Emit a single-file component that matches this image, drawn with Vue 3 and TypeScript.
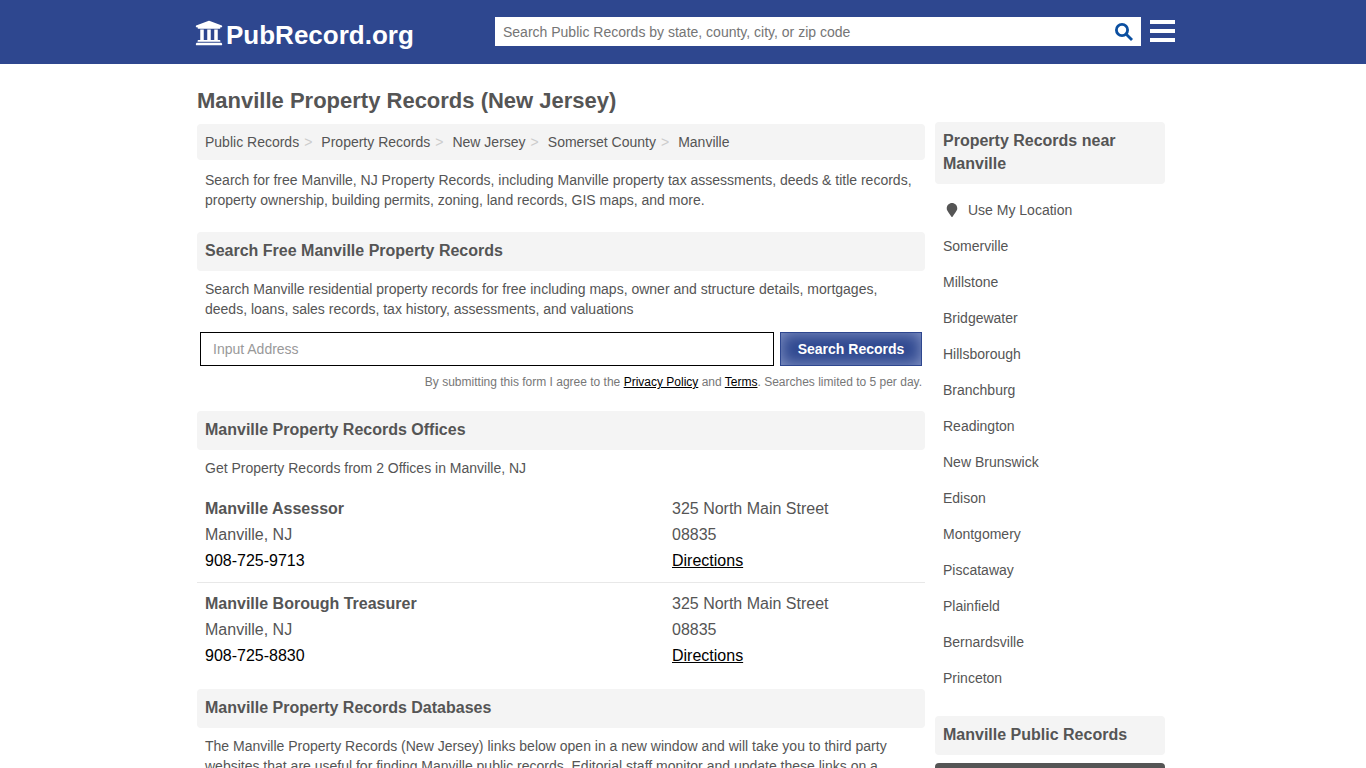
<script setup lang="ts">
import { ref } from 'vue'

interface Office {
  name: string
  city: string
  phone: string
  street: string
  zip: string
}

const query = ref('')
const address = ref('')

const crumbs: string[] = ['Public Records', 'Property Records', 'New Jersey', 'Somerset County', 'Manville']

const offices: Office[] = [
  { name: 'Manville Assessor', city: 'Manville, NJ', phone: '908-725-9713', street: '325 North Main Street', zip: '08835' },
  { name: 'Manville Borough Treasurer', city: 'Manville, NJ', phone: '908-725-8830', street: '325 North Main Street', zip: '08835' },
]

const nearby: string[] = [
  'Somerville', 'Millstone', 'Bridgewater', 'Hillsborough', 'Branchburg', 'Readington', 'New Brunswick',
  'Edison', 'Montgomery', 'Piscataway', 'Plainfield', 'Bernardsville', 'Princeton',
]
</script>

<template>
  <div class="page">
    <header class="topbar">
      <div class="topbar-inner">
        <a class="logo" href="#">
          <svg class="logo-icon" viewBox="0 0 512 512" aria-hidden="true">
            <path d="M496 128v16a8 8 0 0 1-8 8h-24v12c0 6.627-5.373 12-12 12H60c-6.627 0-12-5.373-12-12v-12H24a8 8 0 0 1-8-8v-16a8 8 0 0 1 4.941-7.392l232-88a7.996 7.996 0 0 1 6.118 0l232 88A8 8 0 0 1 496 128zm-24 304H40c-13.255 0-24 10.745-24 24v16a8 8 0 0 0 8 8h464a8 8 0 0 0 8-8v-16c0-13.255-10.745-24-24-24zM96 192v192H60c-6.627 0-12 5.373-12 12v20h416v-20c0-6.627-5.373-12-12-12h-36V192h-64v192h-64V192h-64v192h-64V192H96z" />
          </svg>
          <span>PubRecord.org</span>
        </a>
        <form class="site-search" role="search" @submit.prevent>
          <input v-model="query" type="text" aria-label="Search Public Records" placeholder="Search Public Records by state, county, city, or zip code" />
          <button type="submit" aria-label="Search">
            <svg viewBox="0 0 18 18" aria-hidden="true">
              <circle cx="7" cy="7" r="5.6" />
              <path d="M11 11l6 6" />
            </svg>
          </button>
        </form>
        <button class="menu" type="button" aria-label="Menu">
          <span></span><span></span><span></span>
        </button>
      </div>
    </header>

    <div class="content">
      <main class="main">
        <h1>Manville Property Records (New Jersey)</h1>
        <nav aria-label="Breadcrumb">
          <ol class="crumbs">
            <li v-for="crumb in crumbs" :key="crumb"><a href="#">{{ crumb }}</a></li>
          </ol>
        </nav>
        <p class="intro">Search for free Manville, NJ Property Records, including Manville property tax assessments, deeds &amp; title records, property ownership, building permits, zoning, land records, GIS maps, and more.</p>

        <section>
          <h2>Search Free Manville Property Records</h2>
          <p class="text">Search Manville residential property records for free including maps, owner and structure details, mortgages, deeds, loans, sales records, tax history, assessments, and valuations</p>
          <form class="address" @submit.prevent>
            <input v-model="address" type="text" aria-label="Input Address" placeholder="Input Address" />
            <button type="submit">Search Records</button>
          </form>
          <p class="terms">By submitting this form I agree to the <a href="#">Privacy Policy</a> and <a href="#">Terms</a>. Searches limited to 5 per day.</p>
        </section>

        <section>
          <h2>Manville Property Records Offices</h2>
          <p class="text">Get Property Records from 2 Offices in Manville, NJ</p>
          <ul class="offices">
            <li v-for="office in offices" :key="office.name" class="office">
              <div>
                <h3>{{ office.name }}</h3>
                <div>{{ office.city }}</div>
                <a class="phone" href="#">{{ office.phone }}</a>
              </div>
              <div>
                <div>{{ office.street }}</div>
                <div>{{ office.zip }}</div>
                <a href="#">Directions</a>
              </div>
            </li>
          </ul>
        </section>

        <section>
          <h2>Manville Property Records Databases</h2>
          <p class="text">The Manville Property Records (New Jersey) links below open in a new window and will take you to third party websites that are useful for finding Manville public records. Editorial staff monitor and update these links on a</p>
        </section>
      </main>

      <aside class="side">
        <h2>Property Records near Manville</h2>
        <ul class="nearby">
          <li>
            <a href="#">
              <svg class="pin" viewBox="0 0 384 512" aria-hidden="true">
                <path d="M172.268 501.67C26.97 291.031 0 269.413 0 192 0 85.961 85.961 0 192 0s192 85.961 192 192c0 77.413-26.97 99.031-172.268 309.67-9.535 13.774-29.93 13.773-39.464 0z" />
              </svg>
              Use My Location
            </a>
          </li>
          <li v-for="town in nearby" :key="town"><a href="#">{{ town }}</a></li>
        </ul>
        <h2>Manville Public Records</h2>
        <div class="panel"></div>
      </aside>
    </div>
  </div>
</template>

<style>
body {
  margin: 0;
  background: #fff;
}
</style>

<style scoped>
.page {
  font-family: "Liberation Sans", Arial, sans-serif;
  font-size: 14px;
  line-height: 20px;
  color: #555;
}
.page *,
.page *::before,
.page *::after {
  box-sizing: border-box;
}
h1, h2, h3, p, ul, ol {
  margin: 0;
  padding: 0;
}
ul, ol {
  list-style: none;
}
button {
  border: 0;
  padding: 0;
  cursor: pointer;
  font-family: inherit;
}
input {
  font-family: inherit;
  font-size: 14px;
  border-radius: 0;
  outline: none;
}
.topbar {
  background: #2e478f;
}
.topbar-inner {
  display: flex;
  align-items: flex-start;
  max-width: 984px;
  height: 64px;
  margin: 0 auto;
  padding-left: 4px;
}
.logo {
  display: flex;
  align-items: center;
  flex: 0 0 300px;
  gap: 3px;
  margin-top: 19px;
  color: #fff;
  font-size: 26px;
  font-weight: bold;
  line-height: 30px;
  text-decoration: none;
}
.logo-icon {
  width: 28px;
  height: 28px;
  margin-bottom: 4px;
  fill: #fff;
}
.site-search {
  display: flex;
  flex: 1;
  height: 29px;
  margin-top: 17px;
  background: #fff;
}
.site-search input {
  flex: 1;
  min-width: 0;
  border: 0;
  padding: 0 8px;
  background: transparent;
}
.site-search input::placeholder {
  color: #757575;
}
.site-search button {
  display: flex;
  align-items: center;
  padding: 0 8px 0 4px;
  background: transparent;
}
.site-search svg {
  width: 18px;
  height: 18px;
  fill: none;
  stroke: #0b4fa0;
  stroke-width: 2.8;
}
.menu {
  display: flex;
  flex-direction: column;
  gap: 5px;
  width: 25px;
  margin: 20px 0 0 9px;
  background: transparent;
}
.menu span {
  height: 4px;
  background: #fff;
}
.content {
  display: flex;
  align-items: flex-start;
  gap: 10px;
  max-width: 972px;
  margin: 0 auto;
  padding-right: 4px;
}
.main {
  flex: 1;
  min-width: 0;
}
h1 {
  padding: 23px 0 9px;
  font-size: 22px;
  line-height: 28px;
}
h2 {
  padding: 7px 8px 9px;
  border-radius: 4px;
  background: #f4f4f4;
  font-size: 16px;
  line-height: 23px;
}
.crumbs {
  display: flex;
  padding: 8px;
  border-radius: 4px;
  background: #f4f4f4;
}
.crumbs a,
.nearby a {
  color: #555;
  text-decoration: none;
}
.crumbs li + li::before {
  content: ">";
  margin: 0 9px 0 5px;
  color: #ccc;
}
.intro {
  padding: 10px 8px 22px;
}
.text {
  padding: 8px;
}
.address {
  display: flex;
  gap: 6px;
  padding: 5px 3px 0;
}
.address input {
  flex: 1;
  min-width: 0;
  height: 34px;
  border: 1px solid #000;
  padding: 0 12px;
}
.address input::placeholder {
  color: #999;
}
.address button {
  width: 142px;
  height: 34px;
  border: 1px solid #2e478f;
  background: #2e478f;
  box-shadow: inset 0 0 16px #8a9ac8;
  color: #fff;
  font-size: 14px;
  font-weight: bold;
}
.terms {
  padding: 6px 3px 19px;
  color: #777;
  font-size: 12px;
  text-align: right;
}
.terms a {
  color: #000;
}
.offices {
  padding: 2px 0 12px;
}
.office {
  display: grid;
  grid-template-columns: 1fr 245px;
  padding: 8px;
  font-size: 16px;
  line-height: 26px;
}
.office + .office {
  border-top: 1px solid #e8e8e8;
}
.office h3 {
  font-size: 16px;
}
.office a {
  color: #000;
}
.office .phone {
  text-decoration: none;
}
.side {
  flex: 0 0 230px;
  margin-top: 58px;
}
.nearby {
  padding: 8px 8px 20px;
}
.nearby a {
  display: flex;
  align-items: center;
  line-height: 36px;
}
.pin {
  width: 12px;
  height: 14px;
  margin: 0 10px 0 3px;
  fill: #555;
}
.panel {
  min-height: 36px;
  margin-top: 8px;
  border-radius: 4px;
  background: #555;
}
</style>
